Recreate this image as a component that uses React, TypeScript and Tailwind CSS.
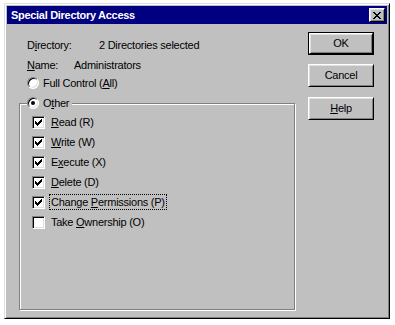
import React from "react";

const font = { fontFamily: '"Liberation Sans", Arial, sans-serif' };

function U({ children }: { children: React.ReactNode }) {
  return <span className="underline underline-offset-[1px] decoration-[1px]">{children}</span>;
}

function Check() {
  const px = [
    [6, 0],
    [5, 1], [6, 1],
    [0, 2], [4, 2], [5, 2], [6, 2],
    [0, 3], [1, 3], [3, 3], [4, 3], [5, 3],
    [0, 4], [1, 4], [2, 4], [3, 4], [4, 4],
    [1, 5], [2, 5], [3, 5],
    [2, 6],
  ];
  return (
    <svg width="7" height="7" viewBox="0 0 7 7" shapeRendering="crispEdges">
      {px.map(([x, y], i) => (
        <rect key={i} x={x} y={y} width="1" height="1" fill="#000" />
      ))}
    </svg>
  );
}

function Checkbox({ checked, label, focus }: { checked: boolean; label: React.ReactNode; focus?: boolean }) {
  return (
    <div className="flex items-center h-[20px]">
      <span className="box-border w-[13px] h-[13px] bg-white border border-t-[#808080] border-l-[#808080] border-b-white border-r-white shadow-[inset_1px_1px_0_#000,inset_-1px_-1px_0_#dfdfdf] flex items-center justify-center">
        {checked && <Check />}
      </span>
      <span
        className={
          "ml-[4px] px-[1px] leading-[14px] border border-dotted " +
          (focus ? "border-black" : "border-transparent")
        }
      >
        {label}
      </span>
    </div>
  );
}

function Radio({ checked, label }: { checked: boolean; label: React.ReactNode }) {
  return (
    <div className="flex items-center h-[16px]">
      <span className="box-border w-[12px] h-[12px] rounded-full bg-white border border-t-[#808080] border-l-[#808080] border-b-white border-r-white shadow-[inset_1px_1px_0_#000,inset_-1px_-1px_0_#dfdfdf] flex items-center justify-center">
        {checked && <span className="w-[4px] h-[4px] rounded-full bg-black" />}
      </span>
      <span className="ml-[4px]">{label}</span>
    </div>
  );
}

function Button({ children, isDefault }: { children: React.ReactNode; isDefault?: boolean }) {
  const inner = (
    <div className="box-border w-full h-full flex items-center justify-center bg-[#c0c0c0] border border-t-white border-l-white border-b-black border-r-black shadow-[inset_1px_1px_0_#dfdfdf,inset_-1px_-1px_0_#808080]">
      {children}
    </div>
  );
  if (isDefault) {
    return <div className="box-border w-[66px] h-[23px] border border-black">{inner}</div>;
  }
  return <div className="box-border w-[66px] h-[23px]">{inner}</div>;
}

export default function App() {
  return (
    <div className="min-h-screen bg-white pt-[3px] pl-[4px] text-[11px] tracking-[-0.25px] text-black" style={font}>
      <div className="box-border w-[386px] h-[316px] bg-[#c0c0c0] border border-t-[#dfdfdf] border-l-[#dfdfdf] border-b-black border-r-black shadow-[inset_1px_1px_0_#fff,inset_-1px_-1px_0_#808080] p-[2px]">
        {/* Title bar */}
        <div className="h-[18px] bg-[#000080] flex items-center pl-[4px] pr-[2px]">
          <span className="text-white font-bold text-[11px] tracking-[-0.3px]">Special Directory Access</span>
          <div className="ml-auto box-border w-[16px] h-[14px] bg-[#c0c0c0] border border-t-white border-l-white border-b-black border-r-black shadow-[inset_1px_1px_0_#dfdfdf,inset_-1px_-1px_0_#808080] flex items-center justify-center">
            <svg width="8" height="7" viewBox="0 0 8 7" shapeRendering="crispEdges">
              <path d="M0 0h2v1h-2z M6 0h2v1h-2z M1 1h2v1h-2z M5 1h2v1h-2z M2 2h4v1h-4z M3 3h2v1h-2z M2 4h4v1h-4z M1 5h2v1h-2z M5 5h2v1h-2z M0 6h2v1h-2z M6 6h2v1h-2z" fill="#000" />
            </svg>
          </div>
        </div>

        {/* Body */}
        <div className="flex">
          {/* Left column */}
          <div className="w-[301px] pl-[12px]">
            <div className="h-[13px]" />
            <div className="flex items-center h-[16px] pl-[8px]">
              <span className="w-[72px]">D<U>i</U>rectory:</span>
              <span>2 Directories selected</span>
            </div>
            <div className="h-[4px]" />
            <div className="flex items-center h-[16px] pl-[8px]">
              <span className="w-[47px]"><U>N</U>ame:</span>
              <span>Administrators</span>
            </div>
            <div className="h-[2px]" />
            <div className="pl-[8px]">
              <Radio checked={false} label={<>Full Control (<U>A</U>ll)</>} />
            </div>
            <div className="h-[12px]" />
            {/* Group box */}
            <div className="relative box-border w-[276px] h-[207px] border border-[#808080] shadow-[inset_1px_1px_0_#fff,1px_1px_0_#fff] pl-[12px] pt-[8px]">
              <div className="absolute left-[7px] top-[-9px] bg-[#c0c0c0] pr-[3px]">
                <Radio checked={true} label={<>O<U>t</U>her</>} />
              </div>
              <Checkbox checked label={<><U>R</U>ead (R)</>} />
              <Checkbox checked label={<><U>W</U>rite (W)</>} />
              <Checkbox checked label={<>E<U>x</U>ecute (X)</>} />
              <Checkbox checked label={<><U>D</U>elete (D)</>} />
              <Checkbox checked focus label={<>Change <U>P</U>ermissions (P)</>} />
              <Checkbox checked={false} label={<>Take <U>O</U>wnership (O)</>} />
            </div>
          </div>

          {/* Right column */}
          <div className="flex flex-col pt-[8px]">
            <Button isDefault>OK</Button>
            <div className="h-[9px]" />
            <Button>Cancel</Button>
            <div className="h-[10px]" />
            <Button><><U>H</U>elp</></Button>
          </div>
        </div>
      </div>
    </div>
  );
}
